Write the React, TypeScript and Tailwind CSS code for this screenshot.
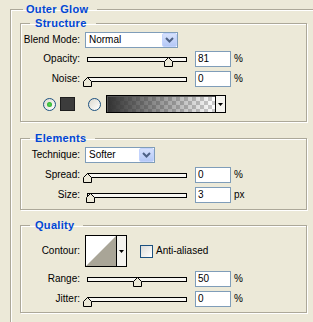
import React from "react";

const FONT = { fontFamily: '"Liberation Sans", Arial, sans-serif' };

function Legend({ children, outer }: { children: React.ReactNode; outer?: boolean }) {
  return (
    <legend
      className={
        "font-bold text-[11px] leading-[14px] tracking-[0.3px] text-[#0046D5] " +
        (outer ? "ml-[12px] pl-[3px] pr-[9px]" : "ml-[9px] pl-[5px] pr-[9px]")
      }
    >
      {children}
    </legend>
  );
}

function Label({ children }: { children: React.ReactNode }) {
  return <div className="w-[59px] text-right text-[10px] leading-[12px] text-black shrink-0">{children}</div>;
}

function Chevron() {
  return (
    <svg width="9" height="6" viewBox="0 0 9 6">
      <path d="M1 1 L4.5 4.5 L8 1" fill="none" stroke="#4D6185" strokeWidth="2" />
    </svg>
  );
}

function Select({ value, width }: { value: string; width: string }) {
  return (
    <div className={"ml-[5px] h-[16px] border border-[#7F9DB9] bg-white flex items-center " + width}>
      <div className="flex-1 pl-[3px] text-[10px] leading-[12px] text-black">{value}</div>
      <div className="w-[15px] h-[14px] rounded-[2px] border border-[#C3D3FD] bg-[linear-gradient(#D6E1FC,#B4C8F6)] flex items-center justify-center">
        <Chevron />
      </div>
    </div>
  );
}

function Thumb() {
  return (
    <svg width="9" height="10" viewBox="0 0 9 10">
      <polygon points="0.5,4.5 4.5,0.5 8.5,4.5 8.5,9.5 0.5,9.5" fill="#ECE9D8" stroke="#000" strokeWidth="1" />
    </svg>
  );
}

function SliderRow({ label, value, pos, unit }: { label: string; value: string; pos: number; unit: string }) {
  return (
    <div className="flex items-center h-[16px]">
      <Label>{label}</Label>
      <div className="relative ml-[3px] w-[109px] h-[16px] pl-[4px] pt-[6px]">
        <div className="w-[100px] h-[5px] border border-black bg-[#F7F6F1]" />
        <div className="absolute top-[6px]" style={{ left: pos }}>
          <Thumb />
        </div>
      </div>
      <div className="ml-[3px] w-[36px] h-[16px] border border-[#7F9DB9] bg-white pl-[2px] text-[10px] leading-[14px] text-black">
        {value}
      </div>
      <div className="ml-[3px] text-[10px] leading-[12px] text-black">{unit}</div>
    </div>
  );
}

function Radio({ checked }: { checked?: boolean }) {
  return (
    <div className="w-[13px] h-[13px] rounded-full border border-[#1C5180] bg-[linear-gradient(135deg,#DCD9CF,#FFFFFF)] flex items-center justify-center shrink-0">
      {checked && <div className="w-[5px] h-[5px] rounded-full bg-[radial-gradient(circle,#55D855,#21A121)]" />}
    </div>
  );
}

const fsClass =
  "border border-[#ACA899] shadow-[inset_1px_1px_0_#FFFFFF,1px_1px_0_#FFFFFF] p-0 m-0 w-[287px]";

export default function App() {
  return (
    <div className="w-[313px] h-[322px] overflow-hidden bg-[#ECE9D8]" style={FONT}>
      <fieldset className="ml-[10px] mt-[2px] w-[330px] border border-[#ACA899] shadow-[inset_1px_1px_0_#FFFFFF,1px_1px_0_#FFFFFF] p-0">
        <Legend outer>Outer Glow</Legend>
        <div className="pl-[9px] pb-[30px]">
          {/* Structure */}
          <fieldset className={fsClass}>
            <Legend>Structure</Legend>
            <div className="pt-[2px] pb-[8px] flex flex-col">
              <div className="flex items-center h-[16px]">
                <Label>Blend Mode:</Label>
                <Select value="Normal" width="w-[93px]" />
              </div>
              <div className="mt-[3px]">
                <SliderRow label="Opacity:" value="81" pos={81} unit="%" />
              </div>
              <div className="mt-[4px]">
                <SliderRow label="Noise:" value="0" pos={0} unit="%" />
              </div>
              <div className="mt-[8px] flex items-center h-[18px] pl-[22px]">
                <Radio checked />
                <div className="ml-[4px] w-[15px] h-[14px] bg-[#3C3C3C] border border-[#1E1E1E]" />
                <div className="ml-[13px]">
                  <Radio />
                </div>
                <div className="ml-[5px] w-[120px] h-[18px] flex border border-black">
                  <div className="flex-1 border-t border-l border-[#555] bg-[linear-gradient(to_right,#333333,rgba(51,51,51,0)),conic-gradient(#CCCCCC_25%,#FFFFFF_0_50%,#CCCCCC_0_75%,#FFFFFF_0)] [background-size:100%_100%,8px_8px]" />
                  <div className="w-[10px] border-l border-black bg-[#F4F3EE] flex items-center justify-center">
                    <svg width="5" height="3" viewBox="0 0 5 3">
                      <polygon points="0,0 5,0 2.5,3" fill="#000" />
                    </svg>
                  </div>
                </div>
              </div>
            </div>
          </fieldset>

          {/* Elements */}
          <fieldset className={fsClass + " mt-[9px]"}>
            <Legend>Elements</Legend>
            <div className="pt-[2px] pb-[6px] flex flex-col">
              <div className="flex items-center h-[16px]">
                <Label>Technique:</Label>
                <Select value="Softer" width="w-[70px]" />
              </div>
              <div className="mt-[4px]">
                <SliderRow label="Spread:" value="0" pos={0} unit="%" />
              </div>
              <div className="mt-[4px]">
                <SliderRow label="Size:" value="3" pos={3} unit="px" />
              </div>
            </div>
          </fieldset>

          {/* Quality */}
          <fieldset className={fsClass + " mt-[8px]"}>
            <Legend>Quality</Legend>
            <div className="pt-[3px] pb-[5px] flex flex-col">
              <div className="flex items-center h-[32px]">
                <Label>Contour:</Label>
                <div className="ml-[5px] w-[42px] h-[32px] border border-black flex bg-white">
                  <svg width="30" height="30" viewBox="0 0 30 30" className="shrink-0">
                    <rect x="0" y="0" width="30" height="30" fill="#FFFFFF" />
                    <polygon points="0,30 30,0 30,30" fill="#A9A597" />
                  </svg>
                  <div className="flex-1 border-l border-black bg-[#F4F3EE] flex items-center justify-center">
                    <svg width="5" height="3" viewBox="0 0 5 3">
                      <polygon points="0,0 5,0 2.5,3" fill="#000" />
                    </svg>
                  </div>
                </div>
                <div className="ml-[13px] w-[13px] h-[13px] border border-[#1C5180] bg-[linear-gradient(135deg,#DCDCD7,#FFFFFF)]" />
                <div className="ml-[3px] text-[10px] leading-[12px] text-black">Anti-aliased</div>
              </div>
              <div className="mt-[4px]">
                <SliderRow label="Range:" value="50" pos={50} unit="%" />
              </div>
              <div className="mt-[4px]">
                <SliderRow label="Jitter:" value="0" pos={0} unit="%" />
              </div>
            </div>
          </fieldset>
        </div>
      </fieldset>
    </div>
  );
}
